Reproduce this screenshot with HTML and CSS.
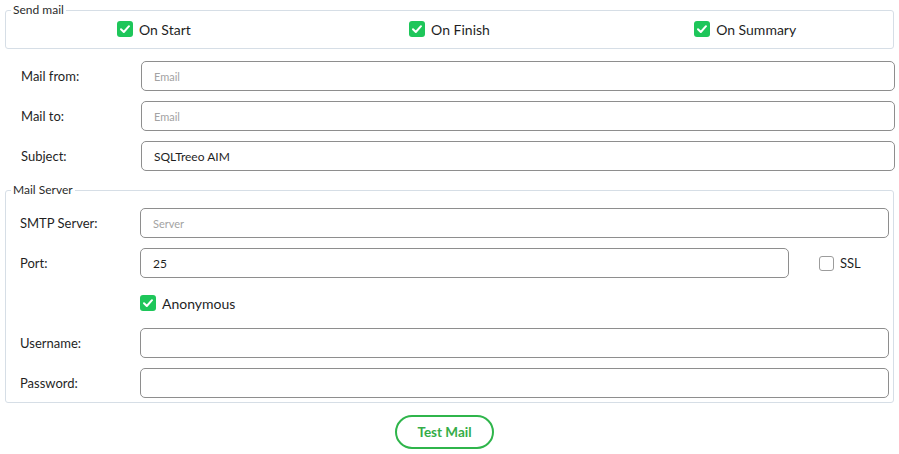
FILE: index.html
```html
<!DOCTYPE html>
<html lang="en">
<head>
  <meta charset="UTF-8">
  <title>Mail settings</title>
  <link rel="stylesheet" href="styles.css">
</head>
<body>
  <div class="page">
    <fieldset class="group send">
      <legend>Send mail</legend>
      <div class="triggers">
        <label class="check"><span class="box on"><svg viewBox="0 0 16 16"><polyline points="4,8.3 6.8,11 12,5.2"/></svg></span>On Start</label>
        <label class="check"><span class="box on"><svg viewBox="0 0 16 16"><polyline points="4,8.3 6.8,11 12,5.2"/></svg></span>On Finish</label>
        <label class="check"><span class="box on"><svg viewBox="0 0 16 16"><polyline points="4,8.3 6.8,11 12,5.2"/></svg></span>On Summary</label>
      </div>
    </fieldset>

    <div class="rows top">
      <span class="lbl">Mail from:</span>
      <input class="field" type="text" placeholder="Email">
      <span class="lbl">Mail to:</span>
      <input class="field" type="text" placeholder="Email">
      <span class="lbl">Subject:</span>
      <input class="field" type="text" value="SQLTreeo AIM">
    </div>

    <fieldset class="group server">
      <legend>Mail Server</legend>
      <div class="rows inner">
        <span class="lbl">SMTP Server:</span>
        <input class="field" type="text" placeholder="Server">
        <span class="lbl">Port:</span>
        <div class="port">
          <input class="field" type="text" value="25">
          <label class="check small"><span class="box"></span>SSL</label>
        </div>
        <span class="lbl"></span>
        <div class="anon">
          <label class="check"><span class="box on"><svg viewBox="0 0 16 16"><polyline points="4,8.3 6.8,11 12,5.2"/></svg></span>Anonymous</label>
        </div>
        <span class="lbl">Username:</span>
        <input class="field" type="text">
        <span class="lbl">Password:</span>
        <input class="field" type="password">
      </div>
    </fieldset>

    <div class="actions">
      <button class="btn">Test Mail</button>
    </div>
  </div>
</body>
</html>
```

FILE: styles.css
```css
body { margin: 0; font-family: Lato, "Liberation Sans", sans-serif; color: #1f1f1f; background: #fff; }
.page { width: 899px; padding-top: 2px; }

.group { margin: 0 5px; padding: 0; border: 1px solid #d6dee6; border-radius: 3px; min-width: 0; }
.group legend { margin-left: 5px; padding: 0 2px; font-size: 12px; line-height: 16px; color: #2b2b2b; }

.triggers { display: grid; grid-template-columns: 1fr 1fr 1fr; height: 20px; margin: 1px 0 9px; }
.check { display: flex; align-items: center; justify-content: center; gap: 6px; font-size: 14px; }
.box { width: 16px; height: 16px; box-sizing: border-box; border: 1px solid #9c9c9c; border-radius: 3px; display: inline-block; }
.box.on { background: #1ec65a; border: none; }
.box svg { width: 16px; height: 16px; display: block; }
.box polyline { fill: none; stroke: #fff; stroke-width: 2; stroke-linecap: round; stroke-linejoin: round; }

.rows { display: grid; grid-template-columns: 120px 1fr; grid-auto-rows: 30px; row-gap: 10px; align-items: center; }
.rows.top { margin-top: 12px; padding: 0 4px 0 21px; }
.rows.inner { padding: 10px 4px 4px 14px; }
.lbl { font-size: 13px; }

.field { height: 30px; box-sizing: border-box; border: 1px solid #8e8e8e; border-radius: 5px; padding: 0 12px; font-family: inherit; font-size: 12px; color: #1f1f1f; width: 100%; }
.field::placeholder { color: #a3a3a3; font-size: 11px; }

.server { margin-top: 11px; }
.port { display: flex; align-items: center; }
.port .field { flex: 1; }
.check.small { width: 70px; margin-left: 30px; justify-content: flex-start; font-size: 13px; }
.check.small .box { width: 15px; height: 15px; }
.anon .check { justify-content: flex-start; }

.actions { display: flex; justify-content: center; margin-top: 12px; padding-right: 10px; }
.btn { width: 99px; height: 34px; border: 2px solid #2fb54b; border-radius: 17px; background: #fff; color: #35ad48; font-family: inherit; font-weight: bold; font-size: 13.5px; }
```
